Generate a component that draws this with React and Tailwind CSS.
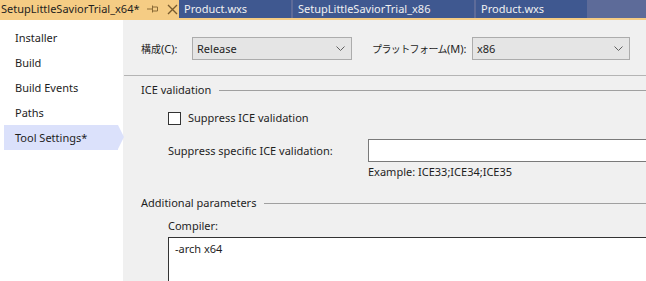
import React from 'react';

const font = { fontFamily: '"Segoe UI", "Noto Sans", "Noto Sans CJK JP", sans-serif' };

const Chevron = () => (
  <svg width="9" height="6" viewBox="0 0 9 6" className="text-[#606060]">
    <path d="M0.5 0.5 L4.5 4.5 L8.5 0.5" fill="none" stroke="currentColor" strokeWidth="1" />
  </svg>
);

const Dropdown = ({ value, width }) => (
  <div
    className={`flex items-center justify-between h-[23px] border border-[#acacac] bg-[#e5e5e5] pl-[4px] pr-[6px] ${width}`}
  >
    <span>{value}</span>
    <Chevron />
  </div>
);

const GroupHeader = ({ title }) => (
  <div className="flex items-center h-[16px] pl-[17px]">
    <span className="pr-[8px]">{title}</span>
    <div className="flex-1 h-px bg-[#a0a0a0]" />
  </div>
);

const tabs = ['Product.wxs', 'SetupLittleSaviorTrial_x86', 'Product.wxs'];
const tabWidths = ['w-[112px]', 'w-[181px]', 'w-[111px]'];

const navItems = ['Installer', 'Build', 'Build Events', 'Paths', 'Tool Settings*'];

export default function App() {
  return (
    <div className="w-[646px] h-[281px] overflow-hidden text-[11px] leading-[16px] text-[#1e1e1e] bg-[#f0f0f0]" style={font}>
      {/* document tabs */}
      <div className="flex h-[18px] bg-[#5d6b99]">
        <div className="flex items-center w-[179px] bg-[#f5cc84] pl-[1px]">
          <span className="whitespace-nowrap w-[146px]">SetupLittleSaviorTrial_x64*</span>
          <svg width="12" height="10" viewBox="0 0 12 10" className="text-[#8a6a36]">
            <path d="M0 5 H5 M5.5 1.5 V8.5 M5.5 3 H10.5 V7 H5.5" fill="none" stroke="currentColor" strokeWidth="1" />
          </svg>
          <svg width="11" height="11" viewBox="0 0 11 11" className="ml-[8px] text-[#7a5c2e]">
            <path d="M1 1 L10 10 M10 1 L1 10" stroke="currentColor" strokeWidth="1.4" />
          </svg>
        </div>
        {tabs.map((t, i) => (
          <div
            key={i}
            className={`flex items-center bg-[#3f5890] text-[#f0f0f0] pl-[5px] whitespace-nowrap ${tabWidths[i]} ${i > 0 ? 'ml-[2px]' : ''}`}
          >
            {t}
          </div>
        ))}
      </div>
      <div className="h-[2px] bg-[#f5cc84]" />

      <div className="flex h-[261px]">
        {/* left navigation */}
        <div className="w-[124px] bg-white pt-[5px] border-r border-[#f0f0f0]">
          {navItems.map((item, i) => {
            const active = i === navItems.length - 1;
            return (
              <div key={item} className="relative h-[25px] ml-[4px] w-[114px]">
                <div className={`flex items-center h-full pl-[11px] ${active ? 'bg-[#dbe1fb]' : ''}`}>
                  {item}
                </div>
                {active && (
                  <div className="absolute right-[-6px] top-0 h-full w-[6px] overflow-hidden">
                    <div className="h-0 w-0 border-y-[12.5px] border-y-transparent border-l-[6px] border-l-[#dbe1fb]" />
                  </div>
                )}
              </div>
            );
          })}
        </div>

        {/* settings page */}
        <div className="flex-1 flex flex-col">
          <div className="flex items-center mt-[17px] pl-[17px] whitespace-nowrap">
            <span className="w-[51px]">
              <span className="text-[10px]">構成</span>(C):
            </span>
            <Dropdown value="Release" width="w-[160px]" />
            <span className="w-[100px] ml-[20px]">
              <span className="text-[10px] tracking-[-0.6px]">プラットフォーム</span>(M):
            </span>
            <Dropdown value="x86" width="w-[158px]" />
          </div>

          <div className="mt-[15px] h-px bg-[#b4b4b4]" />

          <div className="mt-[6px]">
            <GroupHeader title="ICE validation" />
          </div>

          <div className="flex items-center mt-[12px] pl-[44px] h-[16px]">
            <div className="w-[13px] h-[13px] border border-[#333333] bg-white" />
            <span className="ml-[7px]">Suppress ICE validation</span>
          </div>

          <div className="flex items-center mt-[13px] pl-[44px]">
            <span className="w-[200px]">Suppress specific ICE validation:</span>
            <div className="flex-1 h-[23px] border border-[#7a7a7a] border-r-0 bg-white" />
          </div>
          <div className="pl-[244px] mt-[2px] h-[16px]">Example: ICE33;ICE34;ICE35</div>

          <div className="mt-[15px]">
            <GroupHeader title="Additional parameters" />
          </div>

          <div className="pl-[44px] mt-[7px] h-[16px]">Compiler:</div>

          <div className="ml-[44px] mt-[3px] flex-1 border border-[#333333] border-r-0 border-b-0 bg-white pl-[6px] pt-[3px]">
            -arch x64
          </div>
        </div>
      </div>
    </div>
  );
}
